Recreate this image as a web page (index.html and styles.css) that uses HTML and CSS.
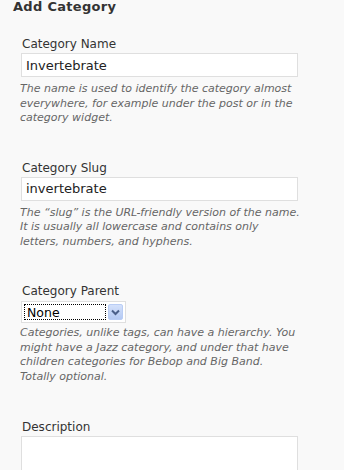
FILE: index.html
```html
<!DOCTYPE html>
<html>
<head>
  <meta charset="utf-8">
  <title>Add Category</title>
  <link rel="stylesheet" href="styles.css">
</head>
<body>
  <div class="form-wrap">
    <h3>Add Category</h3>
    <form id="addcat">
      <div class="form-field">
        <label for="cat_name">Category Name</label>
        <input type="text" id="cat_name" class="text-input" value="Invertebrate">
        <p class="desc">The name is used to identify the category almost everywhere, for example under the post or in the category widget.</p>
      </div>
      <div class="form-field">
        <label for="category_nicename">Category Slug</label>
        <input type="text" id="category_nicename" class="text-input" value="invertebrate">
        <p class="desc">The &ldquo;slug&rdquo; is the URL-friendly version of the name. It is usually all lowercase and contains only letters, numbers, and hyphens.</p>
      </div>
      <div class="form-field field-parent">
        <label>Category Parent</label>
        <div class="select">
          <span class="select-value">None</span>
          <span class="select-arrow">
            <svg width="9" height="7" viewBox="0 0 9 7"><path d="M1 1.5 L4.5 5 L8 1.5" fill="none" stroke="#4a5f8a" stroke-width="2"/></svg>
          </span>
        </div>
        <p class="desc">Categories, unlike tags, can have a hierarchy. You might have a Jazz category, and under that have children categories for Bebop and Big Band. Totally optional.</p>
      </div>
      <div class="form-field">
        <label for="category_description">Description</label>
        <textarea id="category_description" class="text-area"></textarea>
      </div>
    </form>
  </div>
</body>
</html>
```

FILE: styles.css
```css
body {
    margin: 0;
    background: #f9f9f9;
    font-family: "DejaVu Sans", Verdana, sans-serif;
    color: #333;
}

.form-wrap {
    padding: 0 0 0 13px;
}

h3 {
    margin: 0;
    font-size: 13px;
    line-height: 13px;
    font-weight: bold;
    letter-spacing: 0.3px;
    color: #333;
}

#addcat {
    margin-top: 24px;
    padding-left: 7px;
}

.form-field {
    margin-bottom: 35px;
}

.form-field label {
    display: block;
    padding-left: 2px;
    font-size: 12px;
    line-height: 15px;
    color: #333;
    margin-bottom: 1px;
}

.text-input {
    display: block;
    box-sizing: border-box;
    width: 277px;
    height: 24px;
    margin: 0 0 0 1px;
    padding: 0 4px;
    border: 1px solid #dfdfdf;
    background: #fff;
    font-family: "DejaVu Sans", Verdana, sans-serif;
    font-size: 13px;
    color: #222;
    outline: none;
}

.desc {
    margin: 5px 0 0;
    width: 280px;
    font-size: 11px;
    line-height: 14.5px;
    font-style: italic;
    color: #666;
}

/* fake select, like the old XP dropdown */
.select {
    display: flex;
    align-items: stretch;
    box-sizing: border-box;
    width: 105px;
    height: 22px;
    margin: 2px 0 0 1px;
    padding: 2px;
    border: 1px solid #dfdfdf;
    background: #fff;
}

.select-value {
    flex-grow: 1;
    display: flex;
    align-items: center;
    padding-left: 2px;
    border: 1px dotted #000;
    font-size: 12.5px;
    color: #000;
}

.select-arrow {
    width: 15px;
    margin-left: 2px;
    display: flex;
    align-items: center;
    justify-content: center;
    border-radius: 2px;
    background: linear-gradient(#d4e1fb, #b4c9f3);
    border: 1px solid #b9cdf5;
    box-sizing: border-box;
}

.field-parent .desc {
    margin-top: 3px;
}

.field-parent {
    margin-bottom: 36px;
}

.text-area {
    display: block;
    box-sizing: border-box;
    width: 277px;
    height: 70px;
    margin: 1px 0 0 1px;
    border: 1px solid #dfdfdf;
    background: #fff;
    resize: none;
}
```
